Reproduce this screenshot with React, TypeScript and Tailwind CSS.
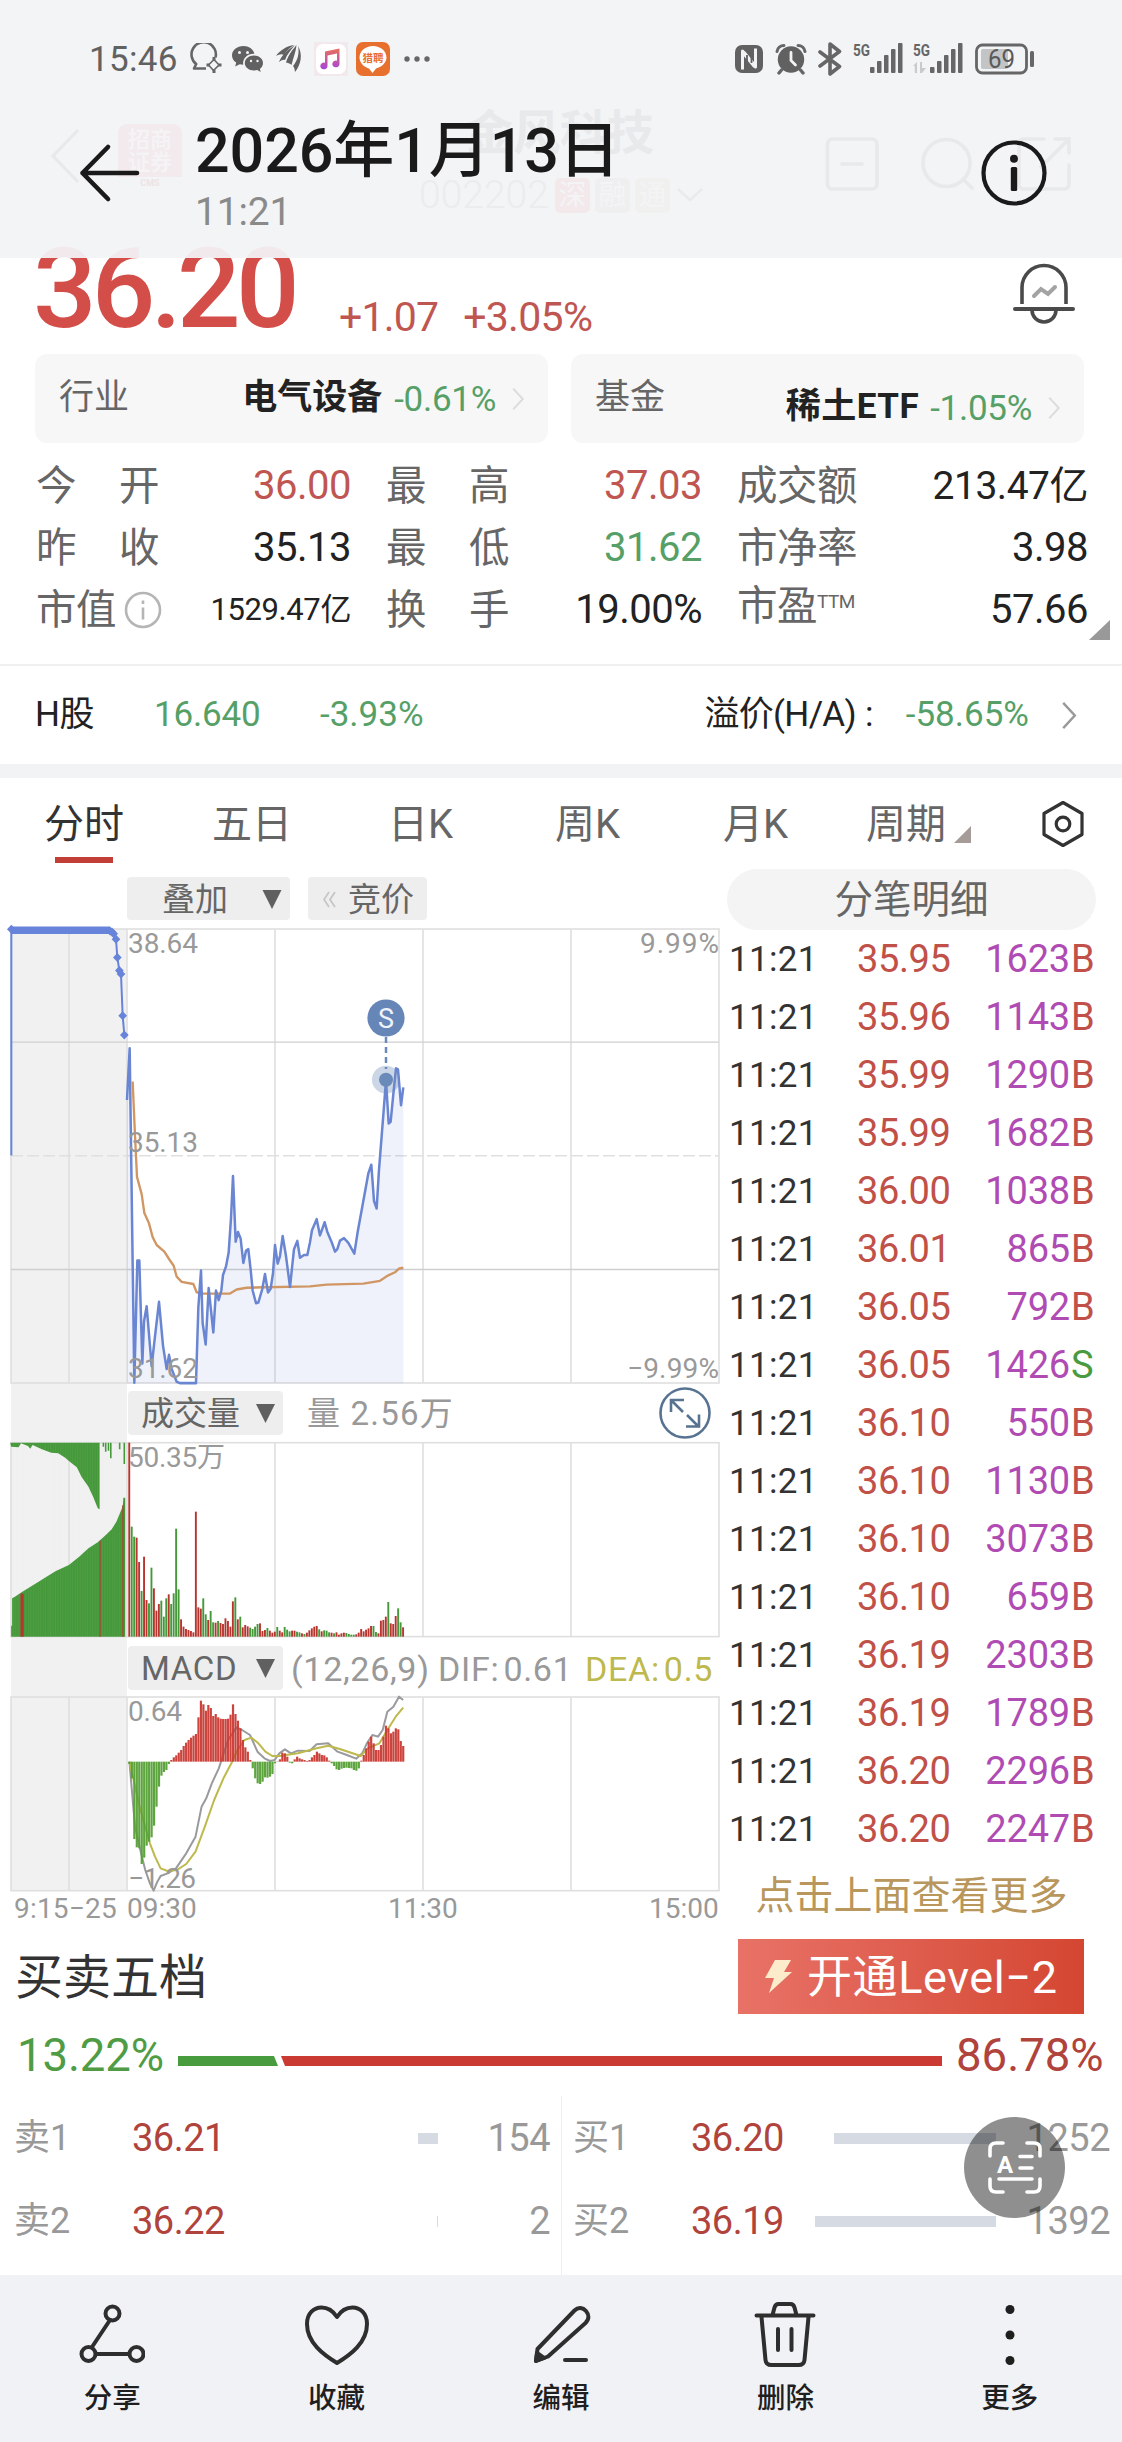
import React from "react";

type Pt = [number, number];
const pts = (list: Pt[]) => list.map((p) => p.join(",")).join(" ");

/* ---------- chart data ---------- */

const auction: Pt[] = [
  [330, 206], [336, 209], [341, 214], [348, 230], [352, 283], [358, 321], [363, 331], [368, 452], [373, 508],
];

const priceLine: Pt[] = [
  [381, 697], [389, 547], [403, 1518], [412, 1163], [418, 1163], [427, 1462], [432, 1340], [440, 1296], [455, 1470],
  [463, 1400], [477, 1283], [489, 1410], [500, 1478], [507, 1437], [515, 1478], [530, 1515], [540, 1519], [588, 1519],
  [595, 1300], [603, 1192], [608, 1345], [617, 1407], [626, 1243], [640, 1372], [648, 1250], [656, 1278], [664, 1250],
  [669, 1205], [678, 1180], [686, 1140], [693, 1040], [699, 918], [707, 1108], [714, 1080], [722, 1100], [730, 1170],
  [738, 1135], [745, 1130], [752, 1190], [758, 1250], [768, 1287], [775, 1285], [787, 1245], [795, 1202], [804, 1256],
  [812, 1245], [819, 1200], [825, 1118], [833, 1172], [840, 1150], [848, 1092], [858, 1150], [870, 1240], [882, 1130],
  [892, 1106], [900, 1155], [912, 1147], [922, 1147], [930, 1110], [936, 1075], [950, 1043], [960, 1090], [974, 1052],
  [982, 1080], [995, 1110], [1005, 1137], [1012, 1130], [1020, 1105], [1032, 1098], [1045, 1112], [1063, 1143],
  [1073, 1080], [1090, 990], [1105, 910], [1114, 885], [1122, 990], [1130, 1012], [1137, 900], [1150, 740],
  [1158, 640], [1166, 765], [1172, 760], [1180, 680], [1188, 605], [1194, 608], [1203, 712], [1210, 660],
];

const averageLine: Pt[] = [
  [398, 643], [405, 800], [411, 920], [425, 970], [433, 1025], [447, 1055], [458, 1095], [470, 1118], [493, 1137],
  [508, 1160], [521, 1178], [530, 1210], [545, 1225], [580, 1231], [590, 1255], [610, 1259], [690, 1259], [710, 1247],
  [740, 1242], [930, 1238], [980, 1233], [1090, 1230], [1140, 1222], [1165, 1206], [1185, 1197], [1198, 1186], [1210, 1184],
];

const volumes =
  "188r 440g 470g 473r 546r 633g 530r 660r 670g 563g 625r 692r 672r 662g 710g 655g 643r 672g 640g 446g 628g 718r 740r 747r 750r 753r 757r 395r 682r 686r 655g 703g 720r 693g 727g 728r 723g 729r 732r 715r 723r 740r 664r 652g 718r 710g 742r 735r 739r 743g 747g 740g 732g 730r 753r 750r 744g 752r 758r 755r 741g 752r 757r 741g 749g 754g 752r 752r 755g 757g 760r 762g 758r 751r 745r 740r 738r 748g 754r 751g 752g 757g 758r 760g 757r 764r 760r 758r 759g 762g 764g 764g 763r 758r 747r 754r 749r 745r 738r 738g 756g 760r 722r 720r 710r 666g 730r 732r 708r 685g 727g 742r"
    .split(" ")
    .map((s) => ({ y: parseInt(s, 10), up: s.endsWith("r") }));

const macd = [
  372, 415, 597, 622, 625, 672, 653, 617, 605, 592, 557, 500, 440, 407, 396, 390, 372, 360, 352, 346, 338, 330, 318, 308,
  300, 293, 287, 282, 232, 182, 193, 212, 195, 204, 228, 222, 232, 236, 237, 237, 236, 224, 193, 222, 242, 265, 300, 322,
  335, 360, 385, 415, 430, 432, 425, 412, 413, 410, 402, 370, 364, 358, 338, 340, 350, 368, 370, 358, 350, 355, 358, 360,
  363, 360, 352, 345, 335, 340, 345, 346, 352, 362, 370, 378, 388, 390, 386, 384, 383, 384, 385, 390, 392, 385, 362, 345,
  325, 305, 290, 310, 330, 330, 315, 290, 257, 265, 280, 275, 265, 268, 303, 318,
];

const dif: Pt[] = [
  [278, 365], [290, 560], [303, 640], [312, 690], [322, 730], [330, 752], [338, 725], [345, 708], [360, 700], [378, 685],
  [400, 640], [420, 590], [433, 500], [443, 475], [455, 430], [470, 385], [490, 300], [508, 262], [520, 270], [537, 285],
  [553, 335], [568, 355], [580, 363], [590, 360], [600, 340], [612, 328], [625, 340], [640, 332], [665, 333], [680, 313],
  [705, 310], [725, 335], [745, 345], [765, 356], [778, 340], [788, 310], [800, 285], [812, 290], [822, 270], [832, 215],
  [845, 200], [857, 170], [866, 180],
];

const dea: Pt[] = [
  [278, 365], [300, 500], [322, 610], [333, 650], [345, 685], [360, 693], [380, 690], [400, 672], [420, 635], [440, 560],
  [460, 480], [480, 415], [497, 370], [510, 330], [525, 300], [540, 293], [555, 310], [570, 335], [585, 348], [600, 348],
  [640, 340], [680, 325], [705, 317], [730, 327], [775, 348], [790, 325], [815, 310], [832, 270], [850, 230], [866, 203],
];

const auctionVolume: Pt[] = [
  [24, 770], [24, 737], [26, 737], [26, 655], [32, 650], [48, 635], [75, 612], [100, 590], [120, 573], [148, 555],
  [170, 530], [190, 505], [210, 487], [225, 468], [240, 448], [250, 425], [262, 385], [264, 375], [265, 353], [269, 353], [269, 770],
];
const auctionUnmatched: Pt[] = [
  [22, 188], [24, 200], [40, 202], [45, 190], [60, 198], [65, 206], [70, 195], [90, 208], [110, 218], [125, 220], [140, 233],
  [150, 245], [165, 262], [175, 290], [190, 320], [200, 350], [210, 385], [214, 388], [214, 188],
];

const trades: [string, string, string][] = [
  ["35.95", "1623", "B"], ["35.96", "1143", "B"], ["35.99", "1290", "B"], ["35.99", "1682", "B"],
  ["36.00", "1038", "B"], ["36.01", "865", "B"], ["36.05", "792", "B"], ["36.05", "1426", "S"],
  ["36.10", "550", "B"], ["36.10", "1130", "B"], ["36.10", "3073", "B"], ["36.10", "659", "B"],
  ["36.19", "2303", "B"], ["36.19", "1789", "B"], ["36.20", "2296", "B"], ["36.20", "2247", "B"],
];

/* ---------- header ---------- */

function SignalBars({ children }: { children?: React.ReactNode }) {
  return (
    <svg className="h-[36px] w-[52px] overflow-visible" viewBox="0 0 52 36" fill="#666">
      <text x="0" y="15" fontSize="17" fontWeight="700" fontFamily="Roboto" textLength="17" lengthAdjust="spacingAndGlyphs">5G</text>
      <rect x="17" y="26" width="4.5" height="6" rx="1" />
      <rect x="24" y="20" width="4.5" height="12" rx="1" />
      <rect x="31" y="14" width="4.5" height="18" rx="1" />
      <rect x="38" y="8" width="4.5" height="24" rx="1" />
      <rect x="45" y="2" width="4.5" height="30" rx="1" />
      {children}
    </svg>
  );
}

function StatusBar() {
  return (
    <div className="relative flex h-[36px] items-center pl-[89px] pr-[87px]">
      <span className="w-[100px] text-[35px] leading-none tracking-[0.3px] text-[#616161]">15:46</span>
      <svg className="h-[32px] w-[34px]" viewBox="0 0 34 32" fill="none" stroke="#666" strokeWidth="2.6" strokeLinejoin="round">
        <path d="M17 25.500H5l2.200-4.500A12.200 12.200 0 1 1 26.500 14.500" />
        <path d="M25 16.500 30 22l-5.500 5.500L19.500 22Z" strokeWidth="1.600" />
        <path d="M25 14v3M32.500 22H29M25 30v-3M17.500 22H21" strokeWidth="3" />
      </svg>
      <svg className="ml-[8px] h-[32px] w-[33px]" viewBox="0 0 33 32">
        <path fill="#616161" d="M12.500 3C5.800 3 1 7.300 1 12.400c0 2.900 1.600 5.500 4.200 7.200L4.200 23.500l4.500-2.300c1 .3 2.200.5 3.500.5-1-6.500 4.500-11.300 11.200-11C22.200 6 17.800 3 12.500 3Z" />
        <path fill="#616161" d="M32 20c0-4.200-4-7.500-9-7.500s-9.200 3.300-9.200 7.500 4 7.500 9.200 7.500c1.200 0 2.300-.1 3.300-.4l3.400 1.800-.8-3C30.900 24.500 32 22.300 32 20Z" />
        <g fill="#f2f3f5"><circle cx="8.500" cy="9.500" r="1.500" /><circle cx="16.500" cy="9.500" r="1.500" /><circle cx="20" cy="18" r="1.200" /><circle cx="26.500" cy="18" r="1.200" /></g>
      </svg>
      <svg className="ml-[12px] h-[32px] w-[27px]" viewBox="0 0 27 32" fill="#616161">
        <path d="M0 13C4 7 11 3 18 2 12 6 10 9 8 12 5.500 10.500 3 11.500 0 13Z" />
        <path d="M19 2C10 8 6 12 3 19c3-2 4-2.500 6-2C11 11 15 7 19 2Z" />
        <path d="M20.500 2c-3 4-8 9-10.500 17.500 3 .5 4 1 5.500 2.500C17 15 20 9 20.500 2Z" />
        <path d="M22 3c1.500 7 0 14-5 20 1.500 1.500 1.500 3 2 6C25 22 27 11 22 3Z" />
      </svg>
      <svg className="ml-[11px] h-[34px] w-[34px]" viewBox="0 0 34 34">
        <defs>
          <linearGradient id="note" x1="0" y1="0" x2="0" y2="1"><stop offset="0" stopColor="#e8705a" /><stop offset="1" stopColor="#a845d8" /></linearGradient>
        </defs>
        <rect width="34" height="34" fill="#f1e9eb" />
        <rect x="2" y="2" width="30" height="30" rx="7" fill="#fff" />
        <path fill="url(#note)" d="M11 9.500 25.500 6.500V22a3.600 3.400 0 1 1-2.500-3.300V11.500l-9.500 2V24a3.600 3.400 0 1 1-2.500-3.300Z" />
      </svg>
      <svg className="ml-[8px] h-[34px] w-[34px]" viewBox="0 0 34 34">
        <rect width="34" height="34" rx="7" fill="#e8702f" />
        <path d="M17 4C9.500 4 3.500 9 3.500 15.500c0 5 4 9.500 9.500 11l3.500 4.500 3.500-4.500c6-1.500 10.500-6 10.500-11C30.500 9 24.500 4 17 4Z" fill="#fff" />
        <text x="6.500" y="19.500" fontSize="10.500" fontWeight="700" fill="#e8702f" fontFamily="'Noto Sans CJK SC'">猎聘</text>
      </svg>
      <svg className="ml-[13px] h-[10px] w-[28px]" viewBox="0 0 28 10" fill="#666">
        <circle cx="4" cy="5" r="2.700" /><circle cx="14" cy="5" r="2.700" /><circle cx="24" cy="5" r="2.700" />
      </svg>

      <div className="ml-auto flex items-center">
        <svg className="h-[30px] w-[28px]" viewBox="0 0 28 30">
          <rect x="0" y="1" width="28" height="28" rx="7" fill="#616161" />
          <path d="M7.500 25.500V7L20.500 23V4.500" fill="none" stroke="#f2f3f5" strokeWidth="3" strokeLinejoin="round" />
          <path d="M8.500 8.500 20 22.500" stroke="#f2f3f5" strokeWidth="4" />
          <path d="M12 11v13M16.500 6v13" stroke="#616161" strokeWidth="1.800" />
        </svg>
        <svg className="ml-[12px] h-[32px] w-[32px]" viewBox="0 0 32 32">
          <circle cx="16" cy="16.500" r="13.200" fill="#616161" />
          <path d="M2 8.500A7 7 0 0 1 9 2.500M30 8.500A7 7 0 0 0 23 2.500" fill="none" stroke="#666" strokeWidth="3" strokeLinecap="round" />
          <path d="M6.500 27 4 30M25.500 27 28 30" stroke="#666" strokeWidth="3.400" strokeLinecap="round" />
          <path d="M16 9.500v8l4.500 4.500" fill="none" stroke="#f2f3f5" strokeWidth="2.800" strokeLinecap="round" />
        </svg>
        <svg className="ml-[11px] h-[34px] w-[24px]" viewBox="0 0 24 34" fill="none" stroke="#666" strokeWidth="3.600" strokeLinejoin="round" strokeLinecap="round">
          <path d="M2 10 21.500 24.500 12 32V2l9.500 7.500L2 24" />
        </svg>
        <div className="ml-[11px]"><SignalBars /></div>
        <div className="ml-[8px]">
          <SignalBars>
            <path d="M4 21v11h-2.200v-7H0zM7 21v11h2V21zM9 32l4-5H9z" fill="#c9cacb" />
          </SignalBars>
        </div>
        <svg className="ml-[10px] h-[32px] w-[60px]" viewBox="0 0 60 32">
          <rect x="1.500" y="2" width="50" height="28" rx="6" fill="none" stroke="#666" strokeWidth="2.800" />
          <rect x="6" y="6" width="27" height="20" rx="2" fill="#c3c4c5" />
          <rect x="55" y="8" width="4" height="16" rx="1.500" fill="#666" />
          <text x="13" y="25" fontSize="25" fill="#5a5a5a" fontFamily="Roboto" textLength="27" lengthAdjust="spacingAndGlyphs">69</text>
        </svg>
      </div>
    </div>
  );
}

/* App bar of the stock page that shines through the viewer's toolbar. */
function UnderlyingBar() {
  return (
    <div className="absolute inset-0 overflow-hidden text-[#e8e9eb]">
      <svg className="absolute left-[50px] top-[128px] h-[56px] w-[30px]" viewBox="0 0 30 56" fill="none" stroke="currentColor" strokeWidth="3">
        <path d="M28 2 3 28l25 26" />
      </svg>
      <div className="absolute left-[118px] top-[124px] h-[64px] w-[64px] overflow-hidden rounded-[9px] bg-[#f2eaec] pt-[4px] text-center text-[22px] font-bold leading-[23px] text-[#f5f3f5]">
        招商
        <br />
        证券
        <div className="mt-[3px] h-[14px] bg-[#f3f4f6] text-[9px] leading-[12px] text-[#eee2e4]">CMS</div>
      </div>
      <span className="absolute left-[466px] top-[106px] text-[47px] font-bold leading-[54px]">金风科技</span>
      <div className="absolute left-[419px] top-[177px] flex items-center gap-[5px] text-[#ebecee]">
        <span className="w-[131px] text-[39px] font-light leading-[36px]">002202</span>
        <span className="h-[35px] w-[35px] rounded-[5px] bg-[#f3e9eb] text-center text-[28px] leading-[35px] text-[#f4f4f6]">深</span>
        <span className="h-[35px] w-[35px] rounded-[5px] bg-[#efefef] text-center text-[28px] leading-[35px] text-[#f4f4f6]">融</span>
        <span className="h-[35px] w-[35px] rounded-[5px] bg-[#f0f0ee] text-center text-[28px] leading-[35px] text-[#f4f4f6]">通</span>
        <svg className="ml-[2px] h-[16px] w-[26px]" viewBox="0 0 26 16" fill="none" stroke="#e9eaec" strokeWidth="2.500"><path d="M1 2l12 11L25 2" /></svg>
      </div>
      <svg className="absolute left-[824px] top-[135px] h-[58px] w-[250px]" viewBox="0 0 250 58" fill="none" stroke="currentColor" strokeWidth="3.600" strokeLinecap="round">
        <rect x="3.500" y="4" width="49.500" height="50" rx="5" />
        <path d="M18 29h20" />
        <circle cx="122.500" cy="28" r="23.500" />
        <path d="M140 45l8 8" />
        <path d="M220 4h-20q-5 0-5 5v40q0 5 5 5h40q5 0 5-5V30M231 4h14v14M245 4l-28 28" />
      </svg>
    </div>
  );
}

function Header() {
  return (
    <header className="relative z-10 h-[258px] bg-[#f2f3f5]/94 pt-[41px]">
      <UnderlyingBar />
      <StatusBar />
      <div className="relative mt-[35px] flex pl-[78px] pr-[75px]">
        <svg className="mt-[30px] h-[62px] w-[62px]" viewBox="0 0 62 62" fill="none" stroke="#1a1a1a" strokeWidth="4.600" strokeLinecap="round" strokeLinejoin="round">
          <path d="M30 5 4.500 31 30 57M4.500 31H59" />
        </svg>
        <div className="ml-[55px]">
          <h1 className="text-[61px] font-medium leading-[78px] tracking-[-0.100px] text-[#1a1a1a]">2026年1月13日</h1>
          <div className="mt-[1px] text-[39px] leading-[42px] tracking-[-0.200px] text-[#8a8a8a]">11:21</div>
        </div>
        <svg className="ml-auto mt-[28px] h-[66px] w-[66px]" viewBox="0 0 66 66">
          <circle cx="33" cy="33" r="30.500" fill="none" stroke="#1a1a1a" strokeWidth="4.200" />
          <circle cx="33" cy="18.800" r="4" fill="#1a1a1a" />
          <rect x="29.800" y="27" width="6.400" height="24" rx="1.500" fill="#1a1a1a" />
        </svg>
      </div>
    </header>
  );
}

/* ---------- quote ---------- */

function Chevron({ className }: { className: string }) {
  return (
    <svg className={className} viewBox="0 0 16 30" fill="none" stroke="currentColor" strokeWidth="2.500">
      <path d="M2 2l12 13L2 28" />
    </svg>
  );
}

function Stat({ label, value, tone = "text-[#222]", className = "" }: { label: React.ReactNode; value: string; tone?: string; className?: string }) {
  return (
    <div className={`flex items-center justify-between ${className}`}>
      <span className="flex w-[123px] justify-between whitespace-nowrap text-[40.500px] text-[#666]">{label}</span>
      <span className={`whitespace-nowrap ${tone}`}>{value}</span>
    </div>
  );
}

const spaced = (a: string, b: string) => (
  <>
    <span>{a}</span>
    <span>{b}</span>
  </>
);

function Quote() {
  return (
    <section className="relative pb-[23px]">
      <div className="flex h-[96px] items-end pl-[33px] pr-[47px]">
        <span className="mb-[9px] w-[306px] text-[112px] font-medium leading-[113px] tracking-[-4.800px] text-[#d34e49]">36.20</span>
        <span className="mb-[16px] text-[41px] leading-[41px] tracking-[-0.800px] text-[#c05651]">+1.07</span>
        <span className="mb-[16px] ml-[25px] text-[41px] leading-[41px] tracking-[-0.700px] text-[#c05651]">+3.05%</span>
        <svg className="mb-[29px] ml-auto h-[63px] w-[62px]" viewBox="0 0 62 63" fill="none" stroke="#4a4a4a" strokeWidth="3.600">
          <path d="M9 42V25.500a22 22 0 0 1 44 0V42" />
          <path d="M2 47h58" strokeLinecap="round" strokeWidth="4" />
          <path d="M19 48a12 12 0 0 0 24 0" />
          <path d="M21 34l7-7 7 5 7-7" stroke="#a3a3a3" strokeWidth="4" strokeLinecap="round" />
        </svg>
      </div>

      <div className="flex gap-[23px] pl-[35px]">
        <div className="flex h-[89px] w-[513px] items-center rounded-[12px] bg-[#f7f7f7] pl-[24px] pr-[23px] text-[35px]">
          <span className="text-[#666]">行业</span>
          <span className="ml-auto font-bold text-[#222]">电气设备</span>
          <span className="ml-[12px] pt-[3px] tracking-[-0.300px] text-[#56a067]">-0.61%</span>
          <Chevron className="ml-[15px] h-[24px] w-[14px] text-[#dcdcdc]" />
        </div>
        <div className="flex h-[89px] w-[513px] items-center rounded-[12px] bg-[#f7f7f7] pl-[24px] pr-[23px] text-[35px]">
          <span className="text-[#666]">基金</span>
          <span className="ml-auto pt-[18px] font-bold tracking-[0.500px] text-[#222]">稀土ETF</span>
          <span className="ml-[11px] pt-[21px] tracking-[-0.300px] text-[#56a067]">-1.05%</span>
          <Chevron className="ml-[15px] mt-[18px] h-[24px] w-[14px] text-[#dcdcdc]" />
        </div>
      </div>

      <div className="mt-[12px] grid auto-rows-[62px] grid-cols-[315px_316px_351px] gap-x-[35px] pl-[36px] text-[40px] leading-[62px] tracking-[-0.500px]">
        <Stat label={spaced("今", "开")} value="36.00" tone="text-[#c05651]" />
        <Stat label={spaced("最", "高")} value="37.03" tone="text-[#c05651]" />
        <Stat label="成交额" value="213.47亿" tone="text-[39px] text-[#222]" />
        <Stat label={spaced("昨", "收")} value="35.13" />
        <Stat label={spaced("最", "低")} value="31.62" tone="text-[#56a067]" />
        <Stat label="市净率" value="3.98" />
        <Stat
          label={
            <span className="flex items-center gap-[8px]">
              市值
              <svg className="h-[38px] w-[38px]" viewBox="0 0 38 38" fill="none" stroke="#b5b5b5" strokeWidth="2.600">
                <circle cx="19" cy="19" r="17" />
                <path d="M19 16.500v12M19 9.500v3.500" />
              </svg>
            </span>
          }
          value="1529.47亿"
          tone="text-[#222] text-[31px] tracking-[-0.400px]"
        />
        <Stat label={spaced("换", "手")} value="19.00%" />
        <Stat label={<span>市盈<span className="relative -top-[12px] text-[19px]">TTM</span></span>} value="57.66" />
      </div>
      <svg className="absolute bottom-[24px] right-[12px] h-[20px] w-[21px]" viewBox="0 0 21 20" fill="#999"><path d="M21 0v20H0z" /></svg>
    </section>
  );
}

function HShare() {
  return (
    <section className="flex h-[100px] items-center border-t-2 border-[#f0f0f0] pl-[35px] pr-[45px] text-[35px] text-[#56a067]">
      <span className="w-[119px] tracking-[-0.500px] text-[#222]">H股</span>
      <span className="w-[166px] tracking-[-0.200px]">16.640</span>
      <span>-3.93%</span>
      <span className="ml-auto flex items-center tracking-[-0.700px] text-[#222]">溢价(H/A)<span className="ml-[9px]">:</span></span>
      <span className="ml-[33px]">-58.65%</span>
      <Chevron className="ml-[32px] h-[29px] w-[16px] text-[#999]" />
    </section>
  );
}

function Tabs() {
  return (
    <nav className="flex h-[88px] items-start pl-[44px] pt-[15px] text-[40px] leading-[64px] text-[#666]">
      <span className="flex w-[168px] flex-col text-[#333]">
        分时
        <i className="ml-[11px] mt-[0px] h-[6px] w-[58px] bg-[#c23f38]" />
      </span>
      <span className="w-[176px]">五日</span>
      <span className="w-[167px]">日K</span>
      <span className="w-[168px]">周K</span>
      <span className="w-[143px]">月K</span>
      <span className="flex w-[174px]">
        周期
        <svg className="ml-[8px] mt-[33px] h-[17px] w-[17px]" viewBox="0 0 17 17" fill="#a59c9a"><path d="M17 0v17H0z" /></svg>
      </span>
      <svg className="mt-[7px] h-[48px] w-[46px]" viewBox="0 0 46 48" fill="none" stroke="#333" strokeWidth="3.200" strokeLinejoin="round">
        <path d="M23 2.500 42 13.500v21L23 45.500 4 34.500v-21z" />
        <circle cx="23" cy="24" r="6.800" />
      </svg>
    </nav>
  );
}

/* ---------- charts ---------- */

const chartText = { fontFamily: "Roboto, 'Noto Sans CJK SC', sans-serif", fontSize: 28, fill: "#999" };

function Grid({ top, bottom, shadeTop = top, shadeBottom = bottom }: { top: number; bottom: number; shadeTop?: number; shadeBottom?: number }) {
  return (
    <g stroke="#dfdfdf" strokeWidth="1.600" fill="none">
      <rect x="11" y={shadeTop} width="116" height={shadeBottom - shadeTop} fill="#f1f1f1" stroke="none" />
      <rect x="11" y={top} width="708" height={bottom - top} />
      <path d={`M69 ${top}V${bottom}M127 ${top}V${bottom}M275 ${top}V${bottom}M423 ${top}V${bottom}M571 ${top}V${bottom}`} />
    </g>
  );
}

function PriceChart() {
  return (
    <svg className="block h-[460px] w-[727px] overflow-visible" viewBox="0 925 727 460">
      <Grid top={929} bottom={1383} shadeBottom={1385.500} />
      <path d="M11 1042.200H719M11 1269.500H719" stroke="#cfcfcf" strokeWidth="1.300" />
      <path d="M11 1155.800H719" stroke="#e0e0e0" strokeWidth="1.500" strokeDasharray="12 4" />
      <g transform="translate(0 860) scale(0.33333 0.34439)" strokeLinejoin="round">
        <polygon points={`381,1519 ${pts(priceLine)} 1210,1519`} fill="#6a86d8" fillOpacity="0.110" />
        <polyline points={pts(averageLine)} fill="none" stroke="#d09663" strokeWidth="7" />
        <polyline points={pts(priceLine)} fill="none" stroke="#6a86d2" strokeWidth="7.500" />
        <path d="M34 200V858" stroke="#6784da" strokeWidth="6" />
        <path d="M34 204H330" stroke="#6784da" strokeWidth="22" />
        <polyline points={pts([[34, 204], ...auction])} fill="none" stroke="#6784da" strokeWidth="6" />
        {[[34, 201] as Pt, ...auction].map(([x, y], i) => (
          <path key={i} d={`M${x} ${y - 13}l13 13-13 13-13-13z`} fill="#6784da" />
        ))}
      </g>
      <g {...chartText}>
        <text x="128" y="952.500" textLength="70">38.64</text>
        <text x="719" y="952.500" textAnchor="end" textLength="79">9.99%</text>
        <text x="128" y="1151.500" textLength="70">35.13</text>
        <text x="128" y="1377.500" textLength="70">31.62</text>
        <text x="719" y="1377.500" textAnchor="end" textLength="92">−9.99%</text>
      </g>
      <path d="M386 1037v32" stroke="#6a8aba" strokeWidth="2.500" strokeDasharray="6 4" />
      <circle cx="386" cy="1079.700" r="14" fill="#6a8aba" fillOpacity="0.350" />
      <circle cx="386" cy="1079.700" r="7" fill="#6a8aba" />
      <circle cx="386" cy="1018" r="18.600" fill="#6686b8" />
      <text x="386" y="1027.500" textAnchor="middle" fontSize="27" fontFamily="Roboto" fill="#eef3fa">S</text>
    </svg>
  );
}

const barX = (i: number) => 128.3 + i * 2.467;

function VolumeChart() {
  return (
    <svg className="block h-[200px] w-[727px]" viewBox="0 1440 727 200">
      <Grid top={1442.7} bottom={1636.6} shadeTop={1440} shadeBottom={1640} />
      <g transform="translate(0 1380) scale(0.46555 0.33333)">
        <polygon points={pts(auctionVolume)} fill="#45993a" />
        <polygon points={pts(auctionUnmatched)} fill="#45993a" />
        <path d="M222 188V200M227 188V215M233 188V212M238 188V235M257 188V208M267 188V252" stroke="#45993a" strokeWidth="3.400" />
        {Array.from({ length: 45 }, (_, i) => (
          <path key={i} d={`M${29 + i * 5.3} 190V770`} stroke="#f1f1f1" strokeOpacity="0.180" strokeWidth="0.900" />
        ))}
        <path d="M44 641H51V770H44z" fill="#b5362f" />
        <path d="M215 482V770M264 376V770" stroke="#a54a35" strokeWidth="3" />
      </g>
      {volumes.map((v, i) => (
        <rect key={i} x={barX(i)} y={1380 + v.y / 3} width="1.900" height={(770 - v.y) / 3} fill={v.up ? "#b8352f" : "#45993a"} />
      ))}
      <text x="128" y="1467" textLength="97" {...chartText}>50.35万</text>
    </svg>
  );
}

function MacdChart() {
  return (
    <svg className="block h-[198px] w-[727px] overflow-visible" viewBox="0 1695 727 198">
      <Grid top={1697} bottom={1890.700} shadeTop={1695} />
      <g transform="translate(0 1640) scale(0.46555 0.33333)" fill="none" strokeLinejoin="round">
        <polyline points={pts(dif)} stroke="#999a9e" strokeWidth="2" vectorEffect="non-scaling-stroke" />
        <polyline points={pts(dea)} stroke="#bdb94c" strokeWidth="2" vectorEffect="non-scaling-stroke" />
      </g>
      {macd.map((y, i) => (
        <rect
          key={i}
          x={barX(i)}
          y={1640 + Math.min(y, 365) / 3}
          width="2.200"
          height={Math.abs(365 - y) / 3}
          fill={y < 365 ? "#c93a33" : "#55a035"}
          fillOpacity="0.950"
        />
      ))}
      <g {...chartText}>
        <text x="128" y="1720.500" textLength="54">0.64</text>
        <text x="128" y="1888" textLength="68">−1.26</text>
      </g>
    </svg>
  );
}

const Caret = ({ className }: { className: string }) => (
  <svg className={className} viewBox="0 0 20 20" fill="#606060"><path d="M0 0h20L10 20z" /></svg>
);

function IndicatorButton({ children }: { children: React.ReactNode }) {
  return (
    <span className="ml-[1px] flex h-[44px] w-[155px] items-center justify-between rounded-[4px] bg-[#eee] pl-[13px] pr-[8px] pt-[1px] text-[33px] text-[#666]">
      {children}
      <Caret className="h-[19px] w-[19px]" />
    </span>
  );
}

function Charts() {
  return (
    <div className="w-[727px]">
      <div className="flex h-[59px] items-start gap-[18px] pl-[127px] pt-[11px] text-[33px] leading-[43px] text-[#666]">
        <span className="flex h-[43px] w-[163px] items-center justify-between rounded-[4px] bg-[#eee] pl-[35px] pr-[8px] pt-[2px]">
          叠加
          <Caret className="h-[19px] w-[20px]" />
        </span>
        <span className="flex h-[43px] w-[119px] items-center justify-between rounded-[4px] bg-[#eee] pl-[15px] pr-[13px] pt-[2px]">
          <svg className="h-[17px] w-[13px]" viewBox="0 0 13 17" fill="none" stroke="#c6c6c6" strokeWidth="1.800"><path d="M6 1 1 8.500 6 16M12 1 7 8.500 12 16" /></svg>
          竞价
        </span>
      </div>
      <PriceChart />
      <div className="flex h-[55px] pl-[11px]">
        <div className="w-[116px] bg-[#f1f1f1]" />
        <div className="flex flex-1 items-center pr-[16px] leading-none">
          <IndicatorButton>成交量</IndicatorButton>
          <span className="ml-[24px] pt-[2px] text-[33px] tracking-[1.200px] text-[#999]">量 2.56万</span>
          <svg className="ml-auto h-[52px] w-[52px]" viewBox="0 0 52 52" fill="none" stroke="#587391" strokeWidth="2.600">
            <circle cx="26" cy="26" r="24.500" />
            <path d="M24 25 12.500 13.500M12 25V13h13M28 28l11.500 11.500M40 27.500v12H27" />
          </svg>
        </div>
      </div>
      <VolumeChart />
      <div className="flex h-[55px] pl-[11px]">
        <div className="w-[116px] bg-[#f1f1f1]" />
        <div className="flex flex-1 items-center whitespace-nowrap text-[34px] leading-none tracking-[0.700px] text-[#999]">
          <IndicatorButton>MACD</IndicatorButton>
          <span className="ml-[8px] w-[147px] pt-[2px]">(12,26,9)</span>
          <span className="w-[147px] pt-[2px]">DIF:<span className="ml-[4px]">0.61</span></span>
          <span className="pt-[2px] text-[#bdb94c]">DEA:<span className="ml-[4px]">0.5</span></span>
        </div>
      </div>
      <MacdChart />
      <div className="flex h-[32px] items-center pl-[14px] text-[28px] leading-none text-[#999]">
        <span className="w-[113px] tracking-[0.200px]">9:15−25</span>
        <span className="w-[261px]">09:30</span>
        <span className="w-[261px]">11:30</span>
        <span>15:00</span>
      </div>
    </div>
  );
}

function TradeList() {
  return (
    <div className="w-[369px] pt-[3px]">
      <div className="h-[61px] rounded-full bg-[#f4f4f4] text-center text-[38.500px] leading-[61px] text-[#666]">分笔明细</div>
      {trades.map(([price, volume, side], i) => (
        <div key={i} className="flex h-[58px] items-center pl-[2px] text-[38px] leading-none">
          <span className="w-[128px] text-[35px] tracking-[0.300px] text-[#333]">11:21</span>
          <span className="w-[100px] tracking-[-0.400px] text-[#c05048]">{price}</span>
          <span className="flex-1 text-right tracking-[-0.200px] text-[#b04bb3]">{volume}</span>
          <span className={side === "B" ? "ml-[1px] w-[25px] text-[#c05048]" : "ml-[1px] w-[25px] text-[#4a9a42]"}>{side}</span>
        </div>
      ))}
      <div className="pt-[9px] text-center text-[39px] leading-[58px] text-[#b8965c]">点击上面查看更多</div>
    </div>
  );
}

/* ---------- order book ---------- */

function Level({ label, price, volume, bar, buy }: { label: string; price: string; volume: string; bar: string; buy?: boolean }) {
  return (
    <div className={`flex h-[83px] items-center text-[38px] leading-none ${buy ? "w-[561px] pl-[11px] pr-[13px]" : "w-[561px] pl-[14px] pr-[11px]"}`}>
      <span className="w-[118px] text-[36px] text-[#999]">{label}</span>
      <span className="w-[100px] tracking-[-0.500px] text-[#b0433c]">{price}</span>
      <span className={`flex justify-end ${buy ? "w-[205px]" : "w-[206px]"}`}>
        <i className={`mt-[2px] h-[11px] bg-[#d5dae3] ${bar}`} />
      </span>
      <span className="ml-auto tracking-[-0.500px] text-[#999]">{volume}</span>
    </div>
  );
}

function OrderBook() {
  return (
    <section className="relative h-[350px]">
      <div className="flex h-[103px] items-center justify-between pl-[15px] pr-[38px]">
        <h2 className="pt-[3px] text-[48px] leading-none text-[#333]">买卖五档</h2>
        <button className="flex h-[75px] w-[346px] items-center bg-linear-to-r from-[#e87267] to-[#d44631] pl-[27px] text-[45px] leading-none tracking-[0.600px] text-white">
          <svg className="mr-[15px] h-[33px] w-[27px]" viewBox="0 0 27 33">
            <path d="M10 0H26L19 12H27L4 33 9 18H0z" fill="#fdeccb" />
          </svg>
          <span className="pt-[2px]">开通Level−2</span>
        </button>
      </div>
      <div className="flex h-[56px] items-center pl-[17px] text-[45.500px] leading-none">
        <span className="w-[161px] tracking-[-0.100px] text-[#4f9c44]">13.22%</span>
        <svg className="mt-[10px] h-[10px] w-[764px]" viewBox="0 0 764 10">
          <path d="M0 0H96l4 10H0z" fill="#489c3e" />
          <path d="M103 0H764V10H107z" fill="#cb3a32" />
        </svg>
        <span className="ml-[14px] text-[#b0433c]">86.78%</span>
      </div>
      <div className="mt-[12px] flex h-[179px]">
        <div>
          <Level label="卖1" price="36.21" volume="154" bar="w-[20px]" />
          <Level label="卖2" price="36.22" volume="2" bar="w-[1px]" />
        </div>
        <div className="border-l border-[#f0f0f0]">
          <Level buy label="买1" price="36.20" volume="1252" bar="w-[162px]" />
          <Level buy label="买2" price="36.19" volume="1392" bar="w-[181px]" />
        </div>
      </div>
      <div className="absolute right-[57px] top-[192px] flex h-[101px] w-[101px] items-center justify-center rounded-full bg-black/44">
        <svg className="h-[54px] w-[54px]" viewBox="0 0 54 54" fill="none" stroke="#fff" strokeWidth="3.600" strokeLinecap="round">
          <path d="M2 15V8q0-6 6-6h7M39 2h7q6 0 6 6v7M2 38v7q0 6 6 6h7M39 51h7q6 0 6-6v-7" />
          <text x="9" y="31.500" fontSize="24" fontWeight="700" fontFamily="Roboto" fill="#fff" stroke="none">A</text>
          <path d="M32 15.500h12M32 27h12M11 38h33" />
        </svg>
      </div>
    </section>
  );
}

/* ---------- bottom toolbar ---------- */

const actions: [string, React.ReactNode][] = [
  ["分享", <><circle cx="33.500" cy="11.500" r="7" /><circle cx="9.500" cy="52" r="7" /><circle cx="57.500" cy="52" r="7" /><path d="M31 18 13 45M17 52H50" /></>],
  ["收藏", <path d="M33 61C20 53 3 41 3 22 3 11 10 5.500 17.500 5.500 24 5.500 29.500 9.500 33 15 36.500 9.500 42 5.500 48.500 5.500 56 5.500 63 11 63 22 63 41 46 53 33 61Z" />],
  ["编辑", <><path d="M8 59 9.500 47 46.500 8.500C50.500 4.500 55 5.500 58 9s3.500 8-.5 12L20 54.500Z" /><path d="M8 59l1-8 7 5z" fill="#2e2e2e" /><path d="M37 58H58" /></>],
  ["删除", <><path d="M4.500 13.500H61.500M20.500 13l2-7.500q1-3.500 4-3.500h12q3 0 4 3.500l2 7.500M9.500 15l4 43q.5 5 6 5H46.500q5.500 0 6-5l4-43M26 27V48M39.500 27V48" /></>],
  ["更多", <g fill="#1f1f1f" stroke="none"><circle cx="33" cy="7.500" r="4.500" /><circle cx="33" cy="33" r="4.500" /><circle cx="33" cy="58.500" r="4.500" /></g>],
];

function Toolbar() {
  return (
    <footer className="grid h-[167px] grid-cols-5 bg-[#f1f2f6] pt-[27px]">
      {actions.map(([label, icon]) => (
        <div key={label} className="flex flex-col items-center">
          <svg className="h-[66px] w-[66px]" viewBox="0 0 66 66" fill="none" stroke="#2e2e2e" strokeWidth="4" strokeLinejoin="round" strokeLinecap="round">{icon}</svg>
          <span className="mt-[10px] text-[28.500px] font-medium leading-[42px] text-[#1f1f1f]">{label}</span>
        </div>
      ))}
    </footer>
  );
}

export default function App() {
  return (
    <main className="h-[2442px] w-[1122px] overflow-hidden bg-white font-[Roboto,'Noto_Sans_CJK_SC',sans-serif]">
      <Header />
      <Quote />
      <HShare />
      <div className="h-[14px] bg-[#f2f3f5]" />
      <Tabs />
      <div className="flex h-[1059px]">
        <Charts />
        <TradeList />
      </div>
      <OrderBook />
      <Toolbar />
    </main>
  );
}
